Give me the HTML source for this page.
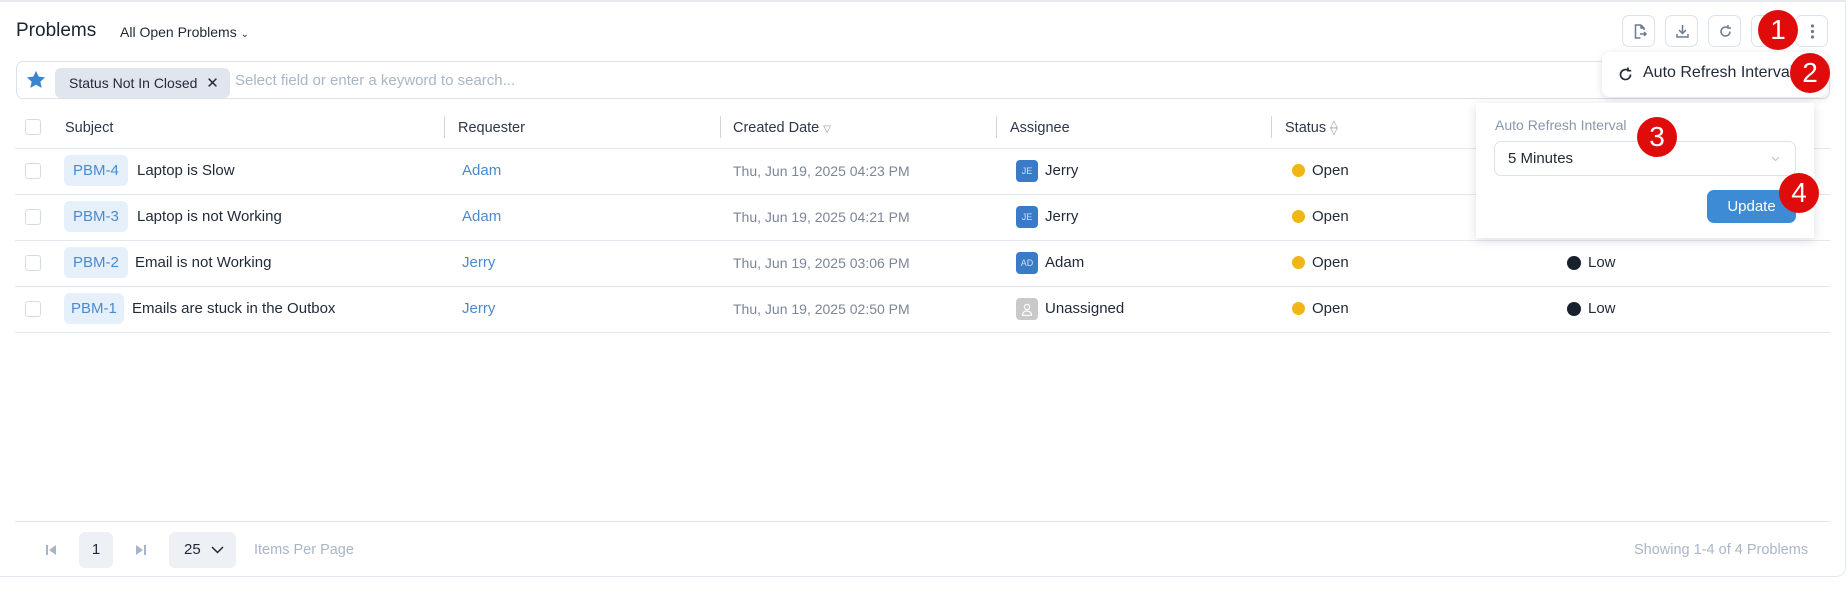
<!DOCTYPE html>
<html><head><meta charset="utf-8">
<style>
*{box-sizing:border-box;margin:0;padding:0}
html,body{width:1848px;height:600px;overflow:hidden;background:#fff;font-family:"Liberation Sans",sans-serif;color:#1f2937}
.abs{position:absolute}
.card{position:absolute;left:0;top:0;width:1846px;height:577px;border-top:2px solid #e6e9ef;border-right:1px solid #e3e8ef;border-bottom:1px solid #e3e8ef;border-bottom-right-radius:10px;background:#fff}
.btn{position:absolute;top:15px;width:33px;height:32px;border:1px solid #dbe2ea;border-radius:7px;background:#fff}
.btn svg{position:absolute;left:8px;top:7px}
.hline{position:absolute;left:15px;width:1815px;height:1px;background:#e3e8ef}
.hdr{position:absolute;top:120px;font-size:14.5px;color:#2d3748}
.div{position:absolute;top:116px;width:1px;height:22px;background:#cdd5df}
.cb{position:absolute;left:25px;width:16px;height:16px;border:1px solid #d5dce5;border-radius:3px;background:#fff}
.badge{position:absolute;left:64px;height:31px;background:#e6f0fb;border-radius:6px;color:#4a8ad0;font-size:15px;line-height:31px;padding:0 9px}
.subj{position:absolute;font-size:15px;color:#1f2937}
.req{position:absolute;left:462px;font-size:15px;color:#4a8ad0}
.date{position:absolute;left:733px;font-size:14px;color:#7b8697}
.av{position:absolute;left:1016px;width:22px;height:22px;border-radius:4px;background:#3a7bc8;color:#cfe0f5;font-size:9px;display:flex;align-items:center;justify-content:center;font-family:"Liberation Sans",sans-serif}
.name{position:absolute;left:1045px;font-size:15px;color:#1f2937}
.dot{position:absolute;left:1292px;width:13px;height:13px;border-radius:50%;background:#f2b516}
.open{position:absolute;left:1312px;font-size:15px;color:#1f2937}
.pdot{position:absolute;left:1567px;width:14px;height:14px;border-radius:50%;background:#17202c}
.low{position:absolute;left:1588px;font-size:15px;color:#1f2937}
.red{position:absolute;width:40px;height:40px;border-radius:50%;background:#e00b0b;color:#fff;font-size:28px;line-height:40px;text-align:center;font-family:"Liberation Sans",sans-serif}
</style></head><body>
<div class="card"></div>

<div class="abs" style="left:16px;top:20px;font-size:19px;color:#1a2333">Problems</div>
<div class="abs" style="left:120px;top:24px;font-size:14px;color:#1f2937">All Open Problems <span style="font-size:10px">&#8964;</span></div>

<div class="btn" style="left:1622px"><svg width="17" height="17" viewBox="0 0 17 17" fill="none" stroke="#6b7a8f" stroke-width="1.5"><path d="M10 2H4.5v13h5M10 2l3 3v2M10 2v3h3"/><path d="M9 11h6M13 9l2 2-2 2"/></svg></div>
<div class="btn" style="left:1665px"><svg width="17" height="17" viewBox="0 0 17 17" fill="none" stroke="#6b7a8f" stroke-width="1.5"><path d="M8.5 2v8M5 7l3.5 3.5L12 7M3 11v3h11v-3"/></svg></div>
<div class="btn" style="left:1708px"><svg width="17" height="17" viewBox="0 0 17 17" fill="none" stroke="#6b7a8f" stroke-width="1.5"><path d="M13 8.5a4.5 4.5 0 1 1-2-3.7M11 2v3h3"/></svg></div>
<div class="btn" style="left:1751px"></div>
<div class="btn" style="left:1795px"><svg width="17" height="17" viewBox="0 0 17 17" fill="#6b7a8f"><circle cx="8.5" cy="3" r="1.6"/><circle cx="8.5" cy="8.5" r="1.6"/><circle cx="8.5" cy="14" r="1.6"/></svg></div>

<div class="abs" style="left:16px;top:61px;width:1814px;height:38px;border:1px solid #dde3ea;border-radius:7px"></div>
<svg class="abs" style="left:26px;top:70px" width="20" height="19" viewBox="0 0 24 23"><path d="M12 1l3.3 7 7.7.9-5.7 5.2 1.6 7.6L12 17.9 5.1 21.7l1.6-7.6L1 8.9 8.7 8z" fill="#3a85d0"/></svg>
<div class="abs" style="left:55px;top:68px;width:175px;height:30px;background:#e1e6ee;border-radius:6px;font-size:14px;line-height:30px;padding-left:14px;color:#1f2937">Status Not In Closed <span style="margin-left:5px;font-size:15px">&#10005;</span></div>
<div class="abs" style="left:235px;top:72px;font-size:15px;color:#a9b6c8">Select field or enter a keyword to search...</div>

<div class="cb" style="top:119px"></div>
<div class="hdr" style="left:65px">Subject</div>
<div class="div" style="left:444px"></div><div class="hdr" style="left:458px">Requester</div>
<div class="div" style="left:720px"></div><div class="hdr" style="left:733px">Created Date <span style="font-size:10px;color:#8a96a8">&#9661;</span></div>
<div class="div" style="left:996px"></div><div class="hdr" style="left:1010px">Assignee</div>
<div class="div" style="left:1271px"></div><div class="hdr" style="left:1285px">Status <span style="font-size:10px;color:#8a96a8;display:inline-block;line-height:7px;vertical-align:middle">&#9651;<br>&#9661;</span></div>

<div class="hline" style="top:148px"></div>
<div class="hline" style="top:194px"></div>
<div class="hline" style="top:240px"></div>
<div class="hline" style="top:286px"></div>
<div class="hline" style="top:332px"></div>

<div class="cb" style="top:163px"></div>
<div class="badge" style="top:155px">PBM-4</div><div class="subj" style="left:137px;top:162px">Laptop is Slow</div>
<div class="req" style="top:162px">Adam</div><div class="date" style="top:163px">Thu, Jun 19, 2025 04:23 PM</div>
<div class="av" style="top:160px">JE</div><div class="name" style="top:162px">Jerry</div>
<div class="dot" style="top:164px"></div><div class="open" style="top:162px">Open</div>

<div class="cb" style="top:209px"></div>
<div class="badge" style="top:201px">PBM-3</div><div class="subj" style="left:137px;top:208px">Laptop is not Working</div>
<div class="req" style="top:208px">Adam</div><div class="date" style="top:209px">Thu, Jun 19, 2025 04:21 PM</div>
<div class="av" style="top:206px">JE</div><div class="name" style="top:208px">Jerry</div>
<div class="dot" style="top:210px"></div><div class="open" style="top:208px">Open</div>

<div class="cb" style="top:255px"></div>
<div class="badge" style="top:247px">PBM-2</div><div class="subj" style="left:135px;top:254px">Email is not Working</div>
<div class="req" style="top:254px">Jerry</div><div class="date" style="top:255px">Thu, Jun 19, 2025 03:06 PM</div>
<div class="av" style="top:252px">AD</div><div class="name" style="top:254px">Adam</div>
<div class="dot" style="top:256px"></div><div class="open" style="top:254px">Open</div>
<div class="pdot" style="top:256px"></div><div class="low" style="top:254px">Low</div>

<div class="cb" style="top:301px"></div>
<div class="badge" style="top:293px;padding:0 7px">PBM-1</div><div class="subj" style="left:132px;top:300px">Emails are stuck in the Outbox</div>
<div class="req" style="top:300px">Jerry</div><div class="date" style="top:301px">Thu, Jun 19, 2025 02:50 PM</div>
<div class="av" style="top:298px;background:#c9c9c9;color:#fff"><svg width="12" height="13" viewBox="0 0 12 13" fill="none" stroke="#fff" stroke-width="1.2"><circle cx="6" cy="4" r="2.6"/><path d="M1.5 12.5c0-3 2-4.5 4.5-4.5s4.5 1.5 4.5 4.5z"/></svg></div><div class="name" style="top:300px">Unassigned</div>
<div class="dot" style="top:302px"></div><div class="open" style="top:300px">Open</div>
<div class="pdot" style="top:302px"></div><div class="low" style="top:300px">Low</div>

<div class="hline" style="top:521px"></div>
<svg class="abs" style="left:45px;top:544px" width="12" height="12" viewBox="0 0 12 12" fill="#a6b4c8"><rect x="1" y="1" width="2" height="10"/><path d="M11 1v10L4 6z"/></svg>
<div class="abs" style="left:79px;top:532px;width:34px;height:36px;background:#edf0f5;border-radius:6px;font-size:15px;line-height:36px;text-align:center">1</div>
<svg class="abs" style="left:135px;top:544px" width="12" height="12" viewBox="0 0 12 12" fill="#a6b4c8"><rect x="9" y="1" width="2" height="10"/><path d="M1 1v10L8 6z"/></svg>
<div class="abs" style="left:169px;top:532px;width:67px;height:36px;background:#edf0f5;border-radius:6px;font-size:15px;line-height:36px;padding-left:15px">25 <svg width="13" height="8" viewBox="0 0 13 8" fill="none" stroke="#1f2937" stroke-width="1.5" style="margin-left:6px"><path d="M1 1l5.5 5.5L12 1"/></svg></div>
<div class="abs" style="left:254px;top:542px;font-size:14.5px;color:#a9b6c8">Items Per Page</div>
<div class="abs" style="left:1634px;top:542px;font-size:14.5px;color:#a9b6c8">Showing 1-4 of 4 Problems</div>

<div class="abs" style="left:1602px;top:52px;width:225px;height:45px;background:#fff;border-radius:8px;box-shadow:0 2px 8px rgba(30,40,60,0.15)"></div>
<svg class="abs" style="left:1617px;top:66px" width="17" height="17" viewBox="0 0 17 17" fill="none" stroke="#1f2937" stroke-width="1.7"><path d="M13.5 8.5a5 5 0 1 1-2.2-4.1M11 1.5v3.2h3.2"/></svg>
<div class="abs" style="left:1643px;top:64px;font-size:16px;color:#1f2937">Auto Refresh Interval</div>

<div class="abs" style="left:1476px;top:103px;width:338px;height:135px;background:#fff;box-shadow:0 3px 10px rgba(30,40,60,0.15)"></div>
<div class="abs" style="left:1495px;top:117px;font-size:14px;color:#8a96ab">Auto Refresh Interval</div>
<div class="abs" style="left:1494px;top:141px;width:302px;height:35px;border:1px solid #dde3ea;border-radius:7px;font-size:15px;line-height:33px;padding-left:13px">5 Minutes</div>
<svg class="abs" style="left:1771px;top:156px" width="9" height="6" viewBox="0 0 9 6" fill="none" stroke="#b8c2cf" stroke-width="1"><path d="M1 1l3.5 3.5L8 1"/></svg>
<div class="abs" style="left:1707px;top:190px;width:89px;height:33px;background:#3d8bd4;border-radius:7px;color:#fff;font-size:15px;line-height:33px;text-align:center">Update</div>

<div class="red" style="left:1758px;top:10px">1</div>
<div class="red" style="left:1790px;top:53px">2</div>
<div class="red" style="left:1637px;top:117px">3</div>
<div class="red" style="left:1779px;top:173px">4</div>
</body></html>
